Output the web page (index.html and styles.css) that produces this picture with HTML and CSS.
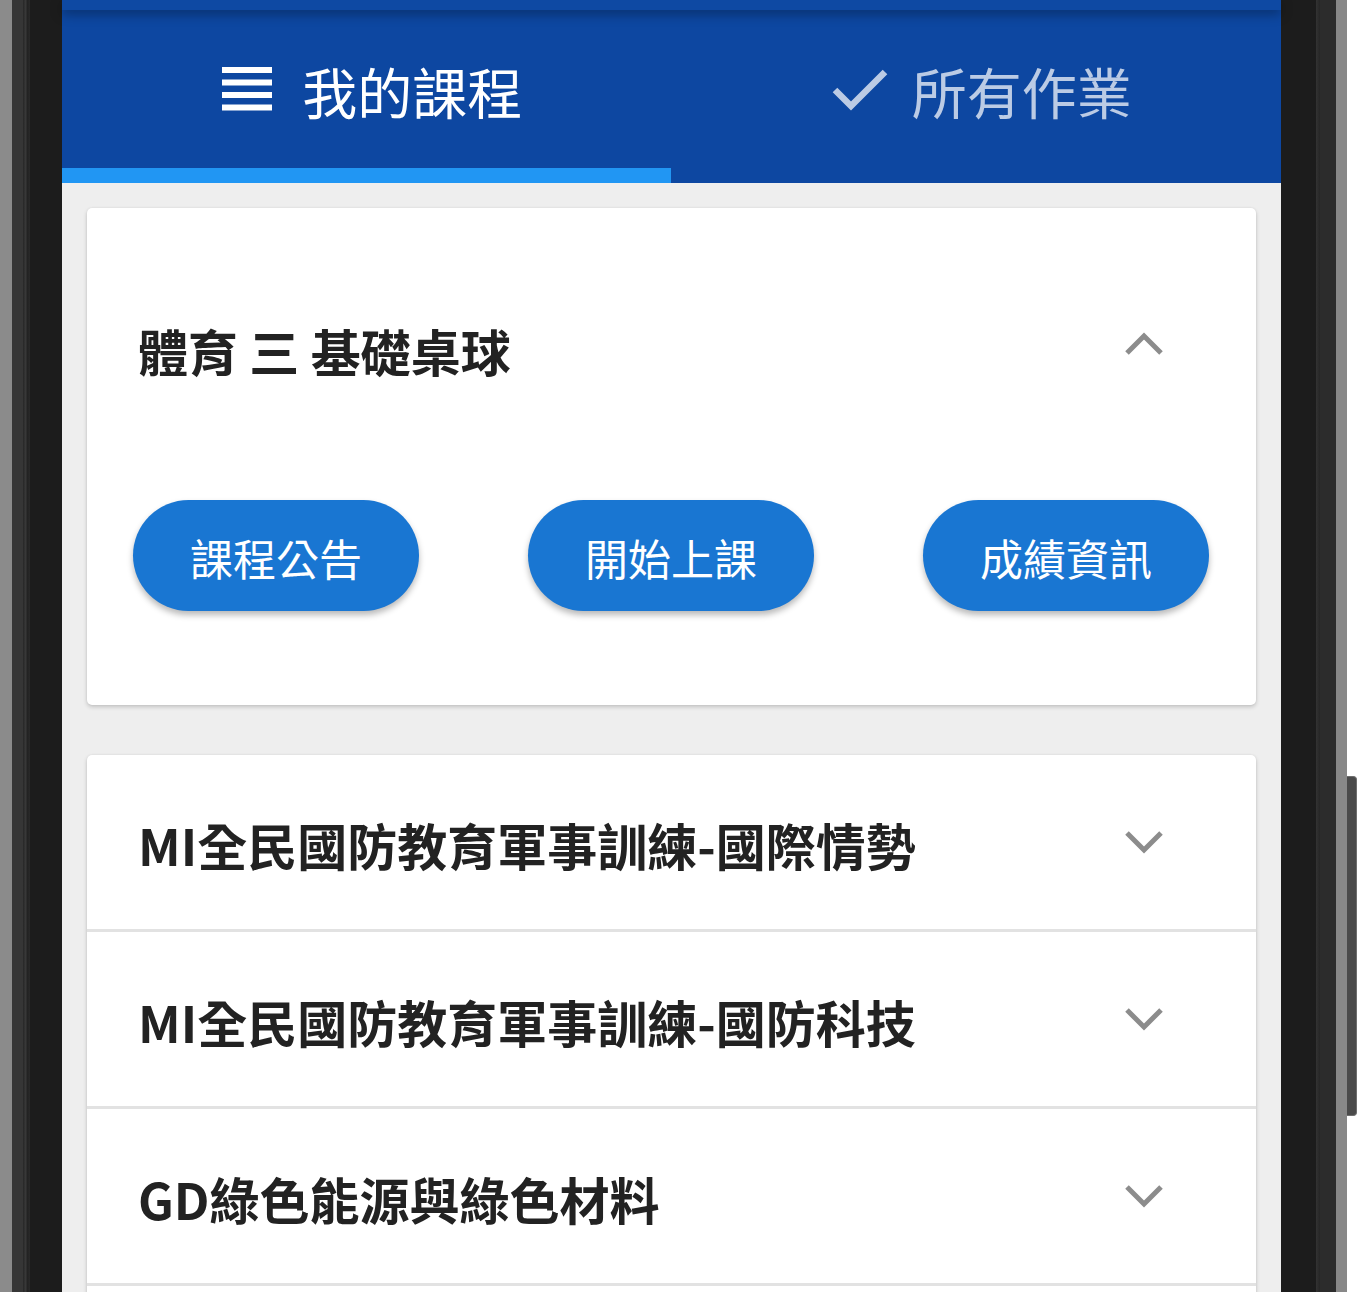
FILE: index.html
```html
<!DOCTYPE html>
<html lang="zh-Hant">
<head>
<meta charset="utf-8">
<title>我的課程</title>
<link rel="stylesheet" href="styles.css">
</head>
<body>
<div class="device">
  <div class="frame-left">
    <div class="fl-gray"></div>
    <div class="fl-mid"></div>
    <div class="fl-line"></div>
    <div class="fl-dark"></div>
  </div>
  <div class="screen">
    <header class="appbar">
      <div class="status"></div>
      <nav class="tabs">
        <div class="tab active">
          <svg class="tab-icon" width="50" height="44" viewBox="0 0 50 44">
            <rect x="0" y="0" width="50" height="6" fill="#fff"/>
            <rect x="0" y="12.5" width="50" height="6" fill="#fff"/>
            <rect x="0" y="25" width="50" height="6" fill="#fff"/>
            <rect x="0" y="37.5" width="50" height="6" fill="#fff"/>
          </svg>
          <span class="tab-label">我的課程</span>
        </div>
        <div class="tab">
          <svg class="tab-icon" width="56" height="44" viewBox="0 0 56 44">
            <path d="M3 23 L19 39 L53 5" fill="none" stroke="rgba(255,255,255,0.72)" stroke-width="6.5"/>
          </svg>
          <span class="tab-label">所有作業</span>
        </div>
      </nav>
      <div class="indicator-track"><div class="indicator"></div></div>
    </header>
    <main class="content">
      <section class="card">
        <div class="card-head">
          <h2 class="course-title">體育 三 基礎桌球</h2>
          <svg class="chev" width="40" height="24" viewBox="0 0 40 24">
            <path d="M3 21 L20 4 L37 21" fill="none" stroke="#8c8c8c" stroke-width="5"/>
          </svg>
        </div>
        <div class="actions">
          <button class="pill">課程公告</button>
          <button class="pill">開始上課</button>
          <button class="pill">成績資訊</button>
        </div>
      </section>
      <section class="card list">
        <div class="row">
          <h2 class="course-title">MI全民國防教育軍事訓練-國際情勢</h2>
          <svg class="chev" width="40" height="24" viewBox="0 0 40 24">
            <path d="M3 3 L20 20 L37 3" fill="none" stroke="#8c8c8c" stroke-width="5"/>
          </svg>
        </div>
        <div class="row">
          <h2 class="course-title">MI全民國防教育軍事訓練-國防科技</h2>
          <svg class="chev" width="40" height="24" viewBox="0 0 40 24">
            <path d="M3 3 L20 20 L37 3" fill="none" stroke="#8c8c8c" stroke-width="5"/>
          </svg>
        </div>
        <div class="row">
          <h2 class="course-title">GD綠色能源與綠色材料</h2>
          <svg class="chev" width="40" height="24" viewBox="0 0 40 24">
            <path d="M3 3 L20 20 L37 3" fill="none" stroke="#8c8c8c" stroke-width="5"/>
          </svg>
        </div>
        <div class="row"></div>
      </section>
    </main>
  </div>
  <div class="frame-right">
    <div class="fr-dark"></div>
    <div class="fr-line"></div>
    <div class="fr-mid"></div>
    <div class="fr-gray"></div>
    <div class="fr-white">
      <div class="side-button"></div>
    </div>
  </div>
</div>
</body>
</html>
```

FILE: styles.css
```css
html, body {
  margin: 0;
  padding: 0;
  height: 1292px;
  overflow: hidden;
  background: #ffffff;
}

body {
  font-family: "Noto Sans CJK TC", "Noto Sans", sans-serif;
}

.device {
  display: flex;
  height: 1292px;
  width: 1359px;
}

/* ---------- phone frame ---------- */
.frame-left {
  display: flex;
  width: 62px;
  flex: none;
}
.fl-gray { width: 12px; background: #8b8b8b; }
.fl-mid { width: 11px; background: #363636; }
.fl-line { width: 7px; background: linear-gradient(90deg, #262626, #3a3a3a 40%, #222 60%, #2a2a2a); }
.fl-dark { flex: 1; background: #1c1c1c; }

.frame-right {
  display: flex;
  width: 78px;
  flex: none;
}
.fr-dark { width: 35px; background: #1c1c1c; }
.fr-line { width: 4px; background: linear-gradient(90deg, #333, #262626); }
.fr-mid { width: 16px; background: #2c2c2c; }
.fr-gray { width: 11px; background: #888888; }
.fr-white {
  flex: 1;
  background: #ffffff;
  position: relative;
}
.side-button {
  position: absolute;
  left: 0;
  top: 776px;
  width: 10px;
  height: 340px;
  background: #4a4a4a;
  border: 1px solid #6e6e6e;
  border-left: none;
  border-radius: 0 4px 4px 0;
  box-sizing: border-box;
}

/* ---------- screen ---------- */
.screen {
  flex: none;
  width: 1219px;
  display: flex;
  flex-direction: column;
  background: #eeeeee;
}

.appbar {
  background: #0d47a1;
  flex: none;
  display: flex;
  flex-direction: column;
}
.status {
  height: 10px;
  background: #0e49a3;
  box-shadow: 0 4px 12px rgba(0, 0, 0, 0.35);
  position: relative;
  z-index: 1;
}
.tabs {
  display: flex;
  height: 158px;
}
.tab {
  flex: 1;
  display: flex;
  align-items: center;
  justify-content: center;
  gap: 24px;
  padding-left: 11px;
  color: rgba(255, 255, 255, 0.72);
}
.tab.active {
  color: #ffffff;
  gap: 30px;
}
.tab-icon {
  display: block;
  flex: none;
}
.tab-label {
  font-size: 55px;
  font-weight: 400;
  line-height: 1;
  letter-spacing: 0;
  position: relative;
  top: 1px;
}
.indicator-track {
  height: 15px;
  display: flex;
}
.indicator {
  width: 609px;
  background: #2196f3;
}

/* ---------- content ---------- */
.content {
  padding: 25px 25px 0;
  display: flex;
  flex-direction: column;
  gap: 50px;
}

.card {
  background: #ffffff;
  border-radius: 5px;
  box-shadow: 0 2px 4px rgba(0, 0, 0, 0.18), 0 0 2px rgba(0, 0, 0, 0.08);
}

.card-head {
  height: 284px;
  display: flex;
  align-items: center;
  justify-content: space-between;
  padding: 0 92px 0 51px;
}
.card-head .chev {
  position: relative;
  top: -6px;
}

.course-title {
  margin: 0;
  font-size: 50px;
  font-weight: 700;
  color: #222222;
  line-height: 1.2;
  letter-spacing: 0;
}

.chev {
  display: block;
  flex: none;
}

.actions {
  display: flex;
  justify-content: space-between;
  padding: 8px 47px 94px 46px;
}
.pill {
  width: 286px;
  height: 111px;
  border: none;
  border-radius: 56px;
  background: #1976d2;
  color: #ffffff;
  font-family: "Noto Sans CJK TC", "Noto Sans", sans-serif;
  font-size: 43px;
  font-weight: 400;
  box-shadow: 0 4px 6px rgba(0, 0, 0, 0.28);
  padding: 0;
  padding-top: 2px;
}

.list .row {
  height: 174px;
  display: flex;
  align-items: center;
  justify-content: space-between;
  padding: 0 92px 0 51px;
  border-bottom: 3px solid #e2e2e2;
}
.list .row .course-title {
  position: relative;
  top: 2px;
}
.list .row:last-child {
  border-bottom: none;
}
```
